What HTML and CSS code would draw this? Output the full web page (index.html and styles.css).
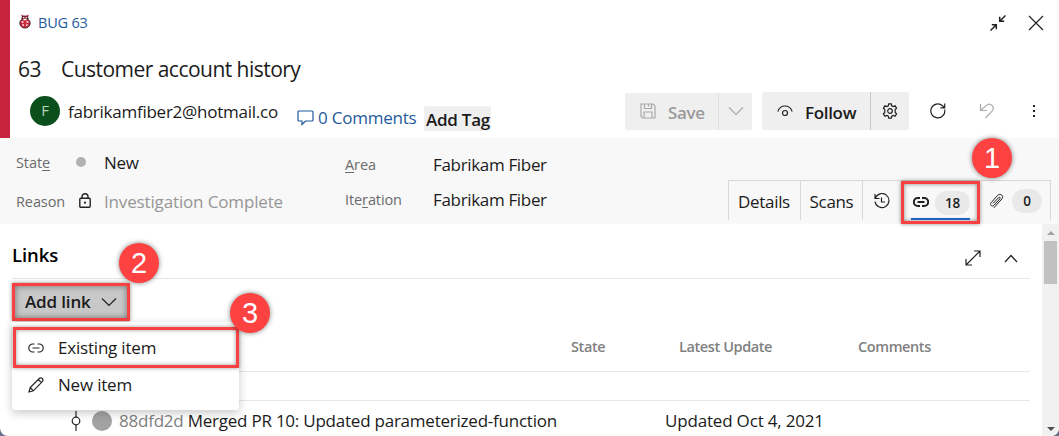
FILE: index.html
```html
<!DOCTYPE html>
<html lang="en">
<head>
<meta charset="utf-8">
<title>Bug 63</title>
<link rel="stylesheet" href="styles.css">
</head>
<body>
<div class="window">
  <header class="header">
    <div class="topline">
      <svg class="bug" width="12" height="15" viewBox="0 0 12 15"><path d="M2.500.8 4 2.300h4L9.500.8" stroke="#cc293d" stroke-width="1.200"/><path d="M3 5V3.200q0-1 1-1h4q1 0 1 1V5z" fill="#cc293d"/><ellipse cx="6" cy="9.200" rx="5.200" ry="4.900" fill="#cc293d"/><path d="M4.200 3.600h1M6.800 3.600h1M2.600 8h1.800M7.600 8h1.800M3.400 11h1.500M7.100 11h1.500M4.500 5.500h3" stroke="#fff" stroke-width="1.400"/></svg>
      <a class="bug-link">BUG 63</a>
      <svg class="shrink" width="16" height="16" viewBox="0 0 16 16"><path d="M.5 15.500 5.800 10.200M1.800 9.700h4.500v4.500M15.500.5 10.200 5.800M14.200 6.300H9.700V1.800"/></svg>
      <svg class="close" width="16" height="16" viewBox="0 0 16 16"><path d="M1 1l14 14M15 1 1 15"/></svg>
    </div>
    <div class="title"><span class="num">63</span><span class="name">Customer account history</span></div>
    <div class="actions">
      <span class="avatar">F</span>
      <span class="email">fabrikamfiber2@hotmail.co</span>
      <svg class="bubble" width="17" height="16" viewBox="0 0 17 16"><path d="M2 1h13q1 0 1 1v8q0 1-1 1H8.500L5 14.500V11H2q-1 0-1-1V2q0-1 1-1z"/></svg>
      <a class="comments">0 Comments</a>
      <span class="tag">Add Tag</span>
      <div class="btn save">
        <span class="part save-main"><svg width="16" height="16" viewBox="0 0 16 16"><path d="M1 1h12l2 2v12H2.500L1 13.500zM4.500 1v4.500h7V1M4 15V9h8v6M8.500 1v2.500"/></svg><b>Save</b></span>
        <span class="part drop"><svg width="16" height="10" viewBox="0 0 16 10"><path d="M1 1.500 8 8.500l7-7"/></svg></span>
      </div>
      <div class="btn follow">
        <span class="part follow-main"><svg width="16" height="12" viewBox="0 0 16 12"><path d="M.8 6.500C2 3.200 4.800 1 8 1s6 2.200 7.200 5.500"/><circle cx="8" cy="8" r="2.500"/></svg><b>Follow</b></span>
        <span class="part gear"><svg width="16" height="16" viewBox="0 0 16 16"><path d="M6.700.8h2.600l.4 2 1.500.8 1.900-.8 1.500 2.300-1.400 1.500v2.800l1.400 1.500-1.500 2.300-1.900-.8-1.500.8-.4 2H6.700l-.4-2-1.500-.8-1.900.8-1.500-2.300 1.400-1.500V6.600L1.400 5.100l1.500-2.300 1.900.8 1.500-.8z"/><circle cx="8" cy="8" r="2.300"/></svg></span>
      </div>
      <svg class="refresh" width="16" height="16" viewBox="0 0 16 16"><path d="M14.700 6.500A7 7 0 1 1 12.500 2.700L14.500 4.600M14.700.5v4.300h-4.300"/></svg>
      <svg class="undo" width="16" height="16" viewBox="0 0 16 16"><path d="M1.500 1v6.500H8M1.800 7.200 7 2.600c2-1.700 4.500-1.500 6 0 1.600 1.700 1.500 4 0 5.600L6.500 15"/></svg>
      <svg class="dots" width="4" height="14" viewBox="0 0 4 14"><path d="M1 1h2v2H1zM1 6h2v2H1zM1 11h2v2H1z"/></svg>
    </div>
  </header>
  <section class="meta">
    <div class="fields">
      <span class="label">Stat<u>e</u></span><i class="dot"></i><span class="value">New</span><span class="label area"><u>A</u>rea</span><span class="value top">Fabrikam Fiber</span>
      <span class="label reason">Reason</span>
      <svg class="lock" width="12" height="15" viewBox="0 0 12 15"><rect x=".8" y="5.200" width="10.400" height="9" rx="1"/><path d="M3 5V3.600a3 2.900 0 0 1 6 0V5"/><circle class="pin" cx="6" cy="9.700" r="1.100"/></svg>
      <span class="value muted">Investigation Complete</span><span class="label iteration">Ite<u>r</u>ation</span><span class="value">Fabrikam Fiber</span>
    </div>
    <nav class="tabs">
      <span class="tab details">Details</span>
      <span class="tab scans">Scans</span>
      <span class="tab history"><svg width="16" height="16" viewBox="0 0 16 16"><path d="M1 1v4.500h4.500M1.300 5.300A7 7 0 1 1 1 8.500M7.500 4.500V9H11"/></svg></span>
      <span class="tab links"><svg width="16" height="10" viewBox="0 0 16 10"><path d="M7 1H4.800a4 4 0 0 0 0 8H7M9 1h2.200a4 4 0 0 1 0 8H9M4.500 5h7"/></svg><span class="count">18</span></span>
      <span class="tab files"><svg width="15" height="16" viewBox="0 0 15 16"><path d="M4 10.500 9.600 4.600c1-1 2.200.1 1.300 1.200L5 12.300c-1.700 1.800-4.700-.4-2.900-2.600L8.700 2.300c2.600-2.500 6.700.6 4.200 3.600L4.900 14.800"/></svg><span class="count">0</span></span>
    </nav>
    <span class="step s1">1</span>
  </section>
  <div class="body">
    <main class="content">
      <div class="section-head">
        <h2>Links</h2>
        <svg class="expand" width="16" height="16" viewBox="0 0 16 16"><path d="M1 15 15 1M9 1h6v6M1 9v6h6"/></svg>
        <svg class="up" width="14" height="9" viewBox="0 0 14 9"><path d="M1 8 7 1.500 13 8"/></svg>
      </div>
      <div class="toolbar">
        <div class="add"><b>Add link</b><svg width="16" height="10" viewBox="0 0 16 10"><path d="M1 1.500 8 8.500l7-7"/></svg></div>
        <div class="menu">
          <div class="item first"><svg width="16" height="10" viewBox="0 0 16 10"><path d="M6.500 1H4.800a4 4 0 0 0 0 8h1.700M9.500 1h1.700a4 4 0 0 1 0 8H9.500M4.500 5h7"/></svg><span>Existing item</span></div>
          <div class="item second"><svg width="16" height="16" viewBox="0 0 16 16"><path d="M1 15l1.200-4.500L11.500 1.300c1.900-1.500 4.500 1 3 3L5.400 13.800zM10.300 2.500l3.200 3.200M2.200 10.500l3.200 3.300"/></svg><span>New item</span></div>
        </div>
        <span class="step s2">2</span>
        <span class="step s3">3</span>
      </div>
      <div class="cols"><span>State</span><span class="latest">Latest Update</span><span class="ccol">Comments</span></div>
      <div class="group"></div>
      <div class="row">
        <svg class="commit" width="10" height="20" viewBox="0 0 10 20"><path d="M5 0v6M5 14v6"/><circle cx="5" cy="10" r="3.800"/></svg>
        <i class="who"></i>
        <span class="desc"><em>88dfd2d</em> <span>Merged PR 10: Updated parameterized-function</span></span>
        <span class="when">Updated Oct 4, 2021</span>
      </div>
    </main>
    <aside class="scroll"><i class="arrow-up"></i><i class="thumb"></i><i class="arrow-down"></i></aside>
  </div>
</div>
</body>
</html>
```
FILE: styles.css
```css
* { box-sizing: border-box; }
body { margin: 0; width: 1059px; height: 436px; overflow: hidden; background: #67718c; color: #1b1b1b; font: 17px/22px "Open Sans", "Noto Sans", sans-serif; letter-spacing: -0.33px; white-space: nowrap; }
svg { display: block; flex: none; fill: none; stroke: #222; stroke-width: 1.2; }
b { font-weight: 600; letter-spacing: -0.15px; }
i { display: block; }
u { text-underline-offset: 2px; text-decoration-thickness: 1px; }

.window { height: 436px; display: flex; flex-direction: column; background: #fff; border-radius: 0 0 8px 8px; overflow: hidden; }

.header { height: 138px; border-left: 10px solid #c8233f; }
.topline { height: 46px; display: flex; align-items: center; padding: 0 15px 0 9px; }
.bug { stroke-width: .8; margin-bottom: 3px; }
.bug-link { margin: 0 0 0 7px; font-size: 14.5px; letter-spacing: -0.2px; color: #1e5a9c; }
.shrink { margin-left: auto; margin-right: 22px; stroke-width: 1.5; }
.title { height: 46px; display: flex; align-items: center; padding: 0 0 1px 8px; font-size: 21px; letter-spacing: -0.53px; }
.num { width: 43px; }

.actions { height: 46px; padding-right: 23px; display: flex; align-items: flex-start; }
.avatar { width: 30px; height: 30px; margin: 4px 8px 0 20px; border-radius: 50%; background: #0b4f1c; color: #b9d3bd; font-size: 15px; line-height: 29px; text-align: center; }
.email { width: 229px; margin-top: 9px; letter-spacing: -0.25px; }
.bubble { margin-top: 18px; stroke: #1e5a9c; }
.comments { width: 106px; margin: 15px 0 0 4px; color: #1e5a9c; letter-spacing: -0.23px; }
.tag { width: 67px; height: 25px; margin-top: 14px; padding-left: 2px; border-radius: 2px; background: #efefef; font-weight: 600; line-height: 27px; letter-spacing: -0.25px; }
.btn { height: 38px; display: flex; border-radius: 2px; background: #efefef; }
.part { display: flex; align-items: center; }
.save { width: 127px; height: 37px; margin: 1px 10px 0 134px; color: #999; }
.save svg { stroke: #aaa; margin-bottom: 2px; }
.save-main { width: 94px; padding-left: 15px; gap: 12px; border-right: 1px solid #e0e0e0; }
.drop, .gear { flex: 1; justify-content: center; }
.follow { width: 147px; }
.follow-main { width: 109px; padding-left: 15px; gap: 12px; border-right: 1px solid #c8c8c8; }
.follow-main b, .save-main b { padding-top: 3px; letter-spacing: -0.33px; }
.refresh { margin: 11px 0 0 21px; }
.undo { margin: 11px 0 0 33px; stroke: #aaa; }
.dots { margin: 12px 0 0 37px; fill: #222; stroke: none; }

.meta { position: relative; height: 86px; background: #f8f8f8; display: flex; align-items: flex-start; }
.fields { width: 728px; padding: 13px 0 0 16px; display: grid; grid-template-columns: 60px 28px 241px 88px 1fr; grid-template-rows: 37px 36px; }
.label { color: #6b6b6b; font-size: 14.5px; letter-spacing: -0.1px; padding-top: 1px; }
.area { padding-top: 3px; }
.reason { padding-top: 3px; }
.iteration { padding-top: 1px; }
.fields .value { padding-top: 1px; }
.fields .top { padding-top: 3px; }
.dot { width: 10px; height: 10px; margin-top: 6px; border-radius: 50%; background: #b2b2b2; }
.lock { margin: 5px 0 0 3px; stroke-width: 1.4; }
.pin { fill: #222; stroke: none; }
.fields .muted { padding-top: 3px; color: #969696; letter-spacing: -0.15px; }
.tabs { width: 323px; height: 40px; margin-top: 42px; display: flex; border: 1px solid #d9d9d9; border-bottom: 0; }
.tab { display: flex; align-items: center; justify-content: center; border-right: 1px solid #d9d9d9; padding-top: 3px; }
.details { width: 72px; padding-right: 1px; }
.scans { width: 62px; }
.history { width: 39px; padding-top: 0; }
.links { position: relative; width: 79px; height: 43px; margin-left: -1px; padding: 0 0 0 2px; gap: 6px; border: 3px solid #f94141; box-shadow: 0 0 4px rgba(0,0,0,.45), inset 0 0 4px rgba(0,0,0,.45); }
.links::after { content: ""; position: absolute; left: 7px; right: 7px; bottom: 1px; height: 2px; background: #1c64bd; }
.links svg { stroke-width: 2; margin-bottom: 2px; }
.count { width: 35px; height: 24px; border-radius: 12px; background: #e9e9e9; font-size: 13.5px; font-weight: 600; line-height: 25px; text-align: center; }
.files { flex: 1; border: 0; padding: 0 0 0 1px; gap: 8px; }
.files svg { stroke-width: 1; }
.files .count { width: 30px; }
.step { position: absolute; width: 40px; height: 40px; border-radius: 50%; background: #fe4242; color: #fff; box-shadow: 0 0 5px rgba(0,0,0,.5); font: 29px/40px "Liberation Sans", Arial, sans-serif; letter-spacing: 0; text-align: center; z-index: 3; }
.s1 { left: 972px; top: 0; }
.s2 { left: 107px; top: -36px; }
.s3 { left: 218px; top: 14px; }

.body { flex: 1; display: flex; min-height: 0; }
.content { width: 1042px; padding: 0 12px; }
.section-head { height: 55px; border-bottom: 1px solid #e6e6e6; display: flex; align-items: center; padding-top: 14px; }
.content > * { width: 1018px; }
h2 { margin: -7px 0 0; font-size: 18.5px; font-weight: 600; letter-spacing: -0.1px; color: #000; }
.expand { margin-left: auto; margin-right: 23px; }
.up { margin-right: 12px; }
.toolbar { position: relative; height: 42px; padding-top: 4px; }
.add { width: 118px; height: 38px; padding-left: 10px; display: flex; align-items: center; gap: 10px; background: #c8c8c8; border: 3px solid #f94141; box-shadow: 0 0 4px rgba(0,0,0,.45), inset 0 0 6px rgba(0,0,0,.45); }
.menu { position: absolute; z-index: 2; left: 0; top: 43px; width: 227px; height: 88px; padding: 5px 0 0 1px; background: #fff; box-shadow: 0 3px 10px rgba(0,0,0,.22); border-radius: 0 0 3px 3px; letter-spacing: -0.2px; }
.item { display: flex; align-items: center; gap: 14px; }
.first { height: 41px; padding-left: 12px; border: 3px solid #f94141; box-shadow: 0 0 4px rgba(0,0,0,.4), inset 0 0 4px rgba(0,0,0,.4); }
.second { height: 34px; padding-left: 15px; }
.cols { height: 51px; padding: 15px 0 0 559px; display: flex; border-bottom: 1px solid #e6e6e6; color: #808080; font-size: 14.5px; font-weight: 600; letter-spacing: -0.4px; }
.cols span { width: 108px; }
.cols .latest { width: 179px; }
.group { height: 29px; border-bottom: 1px solid #e6e6e6; }
.row { height: 35px; padding: 4px 0 0 59px; display: flex; align-items: center; }
.commit { margin-right: 11px; }
.who { width: 20px; height: 20px; margin-right: 7px; border-radius: 50%; background: #a2a2a2; flex: none; }
.desc { width: 440px; margin-right: 106px; flex: none; letter-spacing: -0.23px; }
.desc em { color: #808080; font-style: normal; }
.when { letter-spacing: -0.18px; }
.scroll { width: 17px; background: #f1f1f1; display: flex; flex-direction: column; align-items: center; padding: 7px 0 5px; }
.arrow-up { border: 4px solid transparent; border-top: 0; border-bottom-color: #a3a3a3; }
.thumb { width: 13px; height: 43px; margin-top: 6px; background: #c1c1c1; }
.arrow-down { margin-top: auto; border: 4px solid transparent; border-bottom: 0; border-top-color: #505050; }
```
